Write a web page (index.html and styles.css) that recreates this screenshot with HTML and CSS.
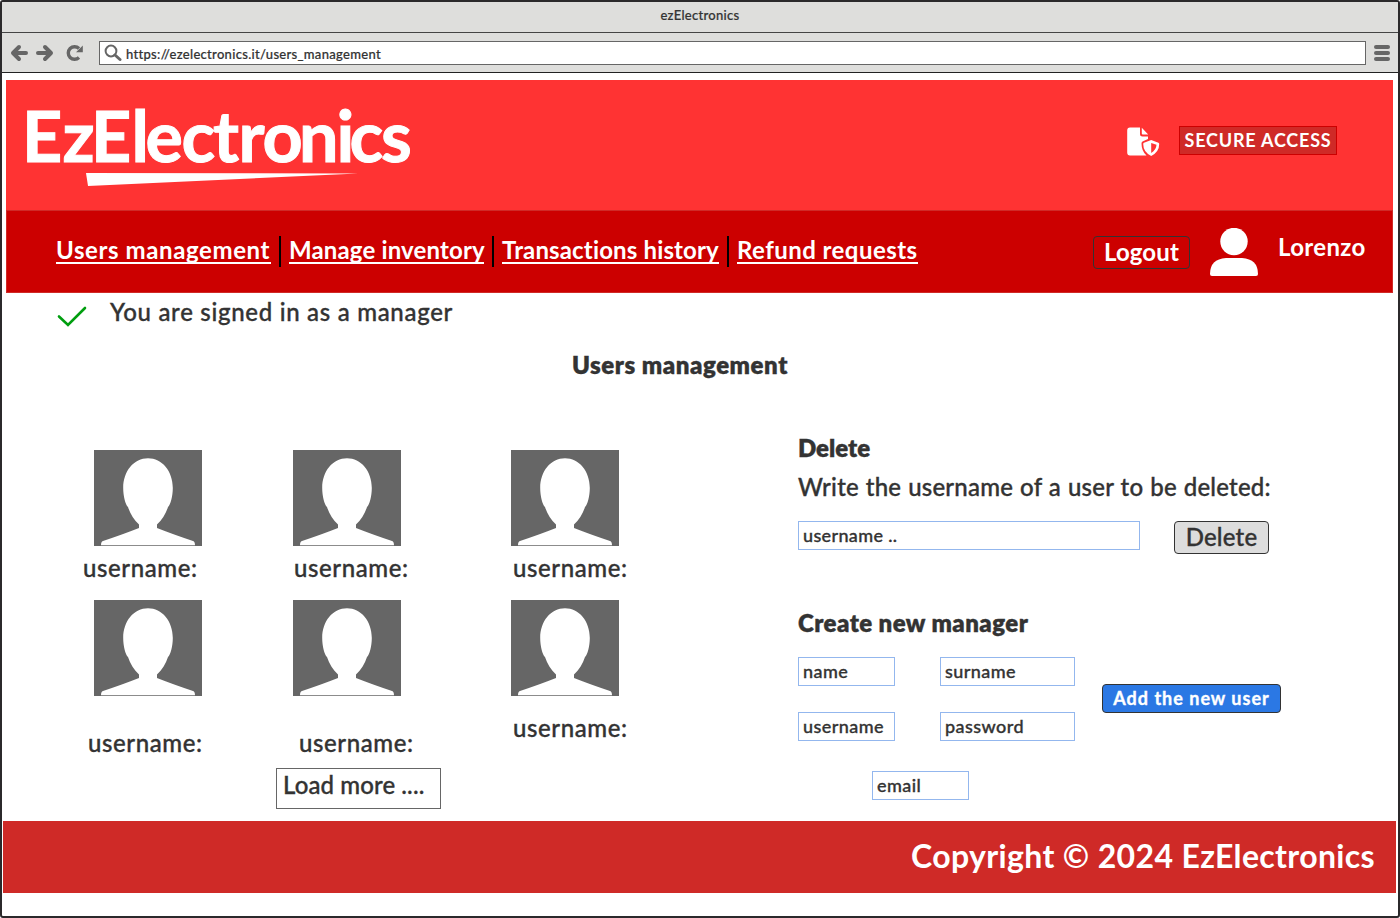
FILE: index.html
```html
<!DOCTYPE html>
<html lang="en">
<head>
<meta charset="utf-8">
<title>ezElectronics</title>
<link rel="stylesheet" href="styles.css">
</head>
<body>
<svg class="defs" width="0" height="0">
  <symbol id="avatar" viewBox="0 0 108 96">
    <rect width="108" height="96" fill="#666"/>
    <path fill="#fff" d="M7 95.2C7 93 7.500 91.500 9 91C22 86.500 34 82.500 45 78V74.500C40 70 36 63.500 34 57C31.500 55 29.200 46 29.200 38C29.200 21 40 8.300 54 8.300C68 8.300 78.800 21 78.800 38C78.800 46 76.500 55 74 57C72 63.500 68 70 63 74.500V78C74 82.500 86 86.500 99 91C100.500 91.500 101 93 101 95.200Z"/>
  </symbol>
</svg>
<div class="window">
  <div class="titlebar"><span>ezElectronics</span></div>
  <div class="toolbar">
    <svg class="nav-icons" width="76" height="20" viewBox="0 0 76 20" fill="none" stroke="#666" stroke-width="4" stroke-linecap="round" stroke-linejoin="round">
      <path d="M16 10H4M9 4L3 10L9 16"/>
      <path d="M28 10H40M35 4L41 10L35 16"/>
      <path d="M69 14.500A6.300 6.300 0 1 1 69 5.500" stroke-width="3.400" stroke-linecap="butt"/>
      <path d="M72.800 2.500V9.300H66Z" fill="#666" stroke="none"/>
    </svg>
    <div class="address">
      <svg width="18" height="18" viewBox="0 0 18 18" fill="none" stroke="#666"><circle cx="7" cy="7" r="5.400" stroke-width="2"/><path d="M11 11L16 15.500" stroke-width="3" stroke-linecap="round"/></svg>
      <span>https://ezelectronics.it/users_management</span>
    </div>
    <div class="menu"><i></i><i></i><i></i></div>
  </div>

  <header class="banner">
    <svg class="logo" width="400" height="130" viewBox="20 80 400 130" fill="#fff">
      <text y="161.700" x="22 62.500 91 131.500 145.500 181.500 213 238.500 262.500 299 336.500 349.500 381">EzElectronics</text>
      <path d="M86 173L358 173.500L88 186Z"/>
    </svg>
    <div class="secure">
      <svg width="33" height="30" viewBox="0 0 33 30">
        <path fill="#fff" d="M3 .5H13V7Q13 9.500 15.500 9.500H21V12L15.500 14.500Q14.500 15 14.500 16.500Q14.500 24 19.500 28.500H3Q.2 28.500.2 25.500V3.500Q.2.5 3 .5ZM14.800.8L21.200 7.600H15.800Q14.800 7.600 14.800 6.500Z"/>
        <path fill="#fff" fill-rule="evenodd" d="M24.200 13L31.400 15.700Q32.200 16 32.200 17Q32.200 25 24.200 28.900Q16.200 25 16.200 17Q16.200 16 17 15.700ZM24.200 15.900V25.900Q29.300 23 29.500 17.800Z"/>
      </svg>
      <span class="secure-tag">SECURE ACCESS</span>
    </div>
  </header>

  <nav class="nav">
    <a class="l1">Users management</a><i></i>
    <a class="l2">Manage inventory</a><i></i>
    <a class="l3">Transactions history</a><i></i>
    <a class="l4">Refund requests</a>
    <div class="account">
      <button class="logout">Logout</button>
      <svg width="48" height="48" viewBox="0 0 48 48" fill="#fff"><circle cx="24" cy="13.500" r="13.700"/><path d="M16 30H32Q48 31 48 46Q48 48 46 48H2Q0 48 0 46Q0 31 16 30Z"/></svg>
      <span class="who">Lorenzo</span>
    </div>
  </nav>

  <main>
    <div class="status">
      <svg width="30" height="24" viewBox="0 0 30 24" fill="none" stroke="#009e0f" stroke-width="2.600" stroke-linecap="round"><path d="M2 11.500L11 20L28 3"/></svg>
      <span>You are signed in as a manager</span>
    </div>
    <h1>Users management</h1>
    <div class="panels">
      <section class="users">
        <div class="grid">
          <figure><svg><use href="#avatar"/></svg><figcaption class="out">username:</figcaption></figure>
          <figure><svg><use href="#avatar"/></svg><figcaption class="near">username:</figcaption></figure>
          <figure><svg><use href="#avatar"/></svg><figcaption>username:</figcaption></figure>
          <figure><svg><use href="#avatar"/></svg><figcaption class="low left">username:</figcaption></figure>
          <figure><svg><use href="#avatar"/></svg><figcaption class="low right">username:</figcaption></figure>
          <figure><svg><use href="#avatar"/></svg><figcaption class="mid">username:</figcaption></figure>
        </div>
        <div class="more">Load more ....</div>
      </section>
      <section class="forms">
        <h2 class="h-delete">Delete</h2>
        <p>Write the username of a user to be deleted:</p>
        <div class="delete-row"><input value="username .."><button class="delete">Delete</button></div>
        <h2 class="h-create">Create new manager</h2>
        <div class="create-row">
          <div class="fields">
            <input value="name"><input value="surname">
            <input value="username"><input value="password">
            <input class="email" value="email">
          </div>
          <button class="add">Add the new user</button>
        </div>
      </section>
    </div>
  </main>
  <footer><span>Copyright © 2024 EzElectronics</span></footer>
</div>
</body>
</html>
```
FILE: styles.css
```css
* { box-sizing: border-box; }
body {
  margin: 0;
  background: #fff;
  color: #333;
  font: 500 24px/30px Lato, "Open Sans", sans-serif;
  letter-spacing: .6px;
  white-space: nowrap;
}
h1, h2, p, figure { margin: 0; font-size: 24px; }
h1, h2 { font-weight: 800; }
button, input { font: inherit; letter-spacing: inherit; color: inherit; padding: 0; margin: 0; }
.defs { display: block; height: 0; }
.window {
  height: 918px;
  border: 2px solid #2b292b;
  border-radius: 3px;
  display: flex;
  flex-direction: column;
  overflow: hidden;
}
.titlebar {
  height: 31px;
  flex: none;
  background: #dededc;
  border-bottom: 1px solid #444;
  text-align: center;
  font-size: 13px;
  line-height: 26px;
  letter-spacing: .3px;
  -webkit-text-stroke: .2px;
}
.toolbar {
  height: 40px;
  flex: none;
  background: #dededc;
  border-bottom: 1px solid #222;
  display: flex;
  align-items: center;
  padding: 0 8px;
}
.nav-icons { margin-right: 13px; }
.address {
  flex: 1;
  height: 24px;
  background: #fff;
  border: 1px solid #666;
  display: flex;
  align-items: center;
  padding-left: 4px;
  font-size: 13px;
  line-height: 22px;
  letter-spacing: .3px;
  -webkit-text-stroke: .2px;
}
.address svg { margin-right: 4px; }
.address span { padding-top: 3px; }
.menu { width: 16px; margin-left: 8px; display: grid; gap: 2px; }
.menu i { height: 4px; border-radius: 2px; background: #666; }

.banner {
  margin: 7px 5px 0 4px;
  height: 130px;
  flex: none;
  background: #f33;
  display: flex;
  justify-content: space-between;
}
.logo { margin-left: 14px; }
.logo text { font: 700 70px Lato, sans-serif; letter-spacing: 0; stroke: #fff; stroke-width: 1px; }
.secure { display: flex; margin: 46px 56px 0 0; }
.secure svg { margin: 1px 19px 0 0; }
.secure-tag {
  width: 158px;
  height: 29px;
  border: 1px solid #c00;
  background: #cf2a27;
  color: #fff;
  text-align: center;
  font-size: 18px;
  font-weight: 700;
  line-height: 27px;
  letter-spacing: .8px;
}
.nav {
  margin: 0 5px 0 4px;
  height: 83px;
  flex: none;
  background: #c00;
  border: 1px solid #cf2a27;
  color: #fff;
  font-weight: 700;
  display: flex;
  align-items: flex-start;
  padding: 24px 28px 0 49px;
}
.nav a { height: 29px; border-bottom: 2px solid #fff; }
.nav > i { width: 2px; height: 31px; margin: 1px 8px 0; background: #000; }
.nav > .l1 { width: 215px; }
.nav > .l2 { width: 195px; letter-spacing: .15px; }
.nav > .l3 { width: 217px; letter-spacing: .15px; }
.nav > .l4 { width: 181px; letter-spacing: .45px; }
.account { margin-left: auto; display: flex; }
.account svg { margin: -7px 20px 0; }
.who { margin-top: -3px; width: 86px; letter-spacing: .35px; }
.logout {
  width: 97px;
  height: 33px;
  margin-top: 1px;
  padding-bottom: 2px;
  background: none;
  border: 1px solid #333;
  border-radius: 4px;
  letter-spacing: .1px;
}
main { height: 528px; flex: none; -webkit-text-stroke: .35px; }
.status { display: flex; padding: 4px 0 0 55px; height: 57px; letter-spacing: .7px; }
.status svg { margin: 8px 23px 0 0; }
h1 { margin-left: 570px; letter-spacing: .55px; }
.panels { display: flex; margin-top: 52px; }
.users { width: 796px; padding: 18px 0 0 92px; }
.grid { display: grid; grid-template: 150px 168px / 199px 218px 120px; }
.grid svg { display: block; width: 108px; height: 96px; }
figcaption { margin: 7px 0 0 2px; }
.out { margin-left: -11px; }
.near { margin-left: 1px; }
.low { margin-top: 32px; }
.left { margin-left: -6px; }
.right { margin-left: 6px; }
.mid { margin-top: 17px; }
.more { width: 165px; height: 41px; border: 1px solid #666; margin-left: 182px; padding: 0 6px; line-height: 31px; letter-spacing: .1px; }
.forms { flex: 1; padding-top: 1px; }
.h-delete { letter-spacing: 0; }
.forms p { margin-top: 9px; word-spacing: .7px; letter-spacing: .2px; }
.forms input { height: 29px; border: 1px solid #93b7ee; padding: 0 0 2px 4px; font-size: 18px; background: #fff; outline: 0; width: 100%; min-width: 0; letter-spacing: .45px; }
.delete-row { display: flex; gap: 34px; margin-top: 19px; }
.forms .delete-row input { width: 342px; letter-spacing: .35px; }
.delete { width: 95px; height: 33px; padding-bottom: 2px; border: 1px solid #333; border-radius: 4px; background: #ddd; letter-spacing: .2px; }
.h-create { margin-top: 54px; letter-spacing: .45px; }
.create-row { display: flex; gap: 27px; margin-top: 19px; }
.fields { display: grid; grid-template-columns: 97px 135px; column-gap: 45px; row-gap: 26px; width: 277px; }
.forms .email { grid-column: 1 / 3; width: 97px; margin: 4px 0 0 74px; }
.add { width: 179px; height: 29px; margin-top: 27px; border: 1px solid #333; border-radius: 4px; background: #2b78e4; color: #fff; font-size: 18px; font-weight: 700; line-height: 27px; letter-spacing: 1px; }
footer {
  margin: 0 2px 0 1px;
  height: 72px;
  flex: none;
  background: #cf2a27;
  color: #fff;
  text-align: right;
  padding-right: 21px;
  font-size: 32px;
  font-weight: 700;
  line-height: 70px;
  letter-spacing: .35px;
}
```
